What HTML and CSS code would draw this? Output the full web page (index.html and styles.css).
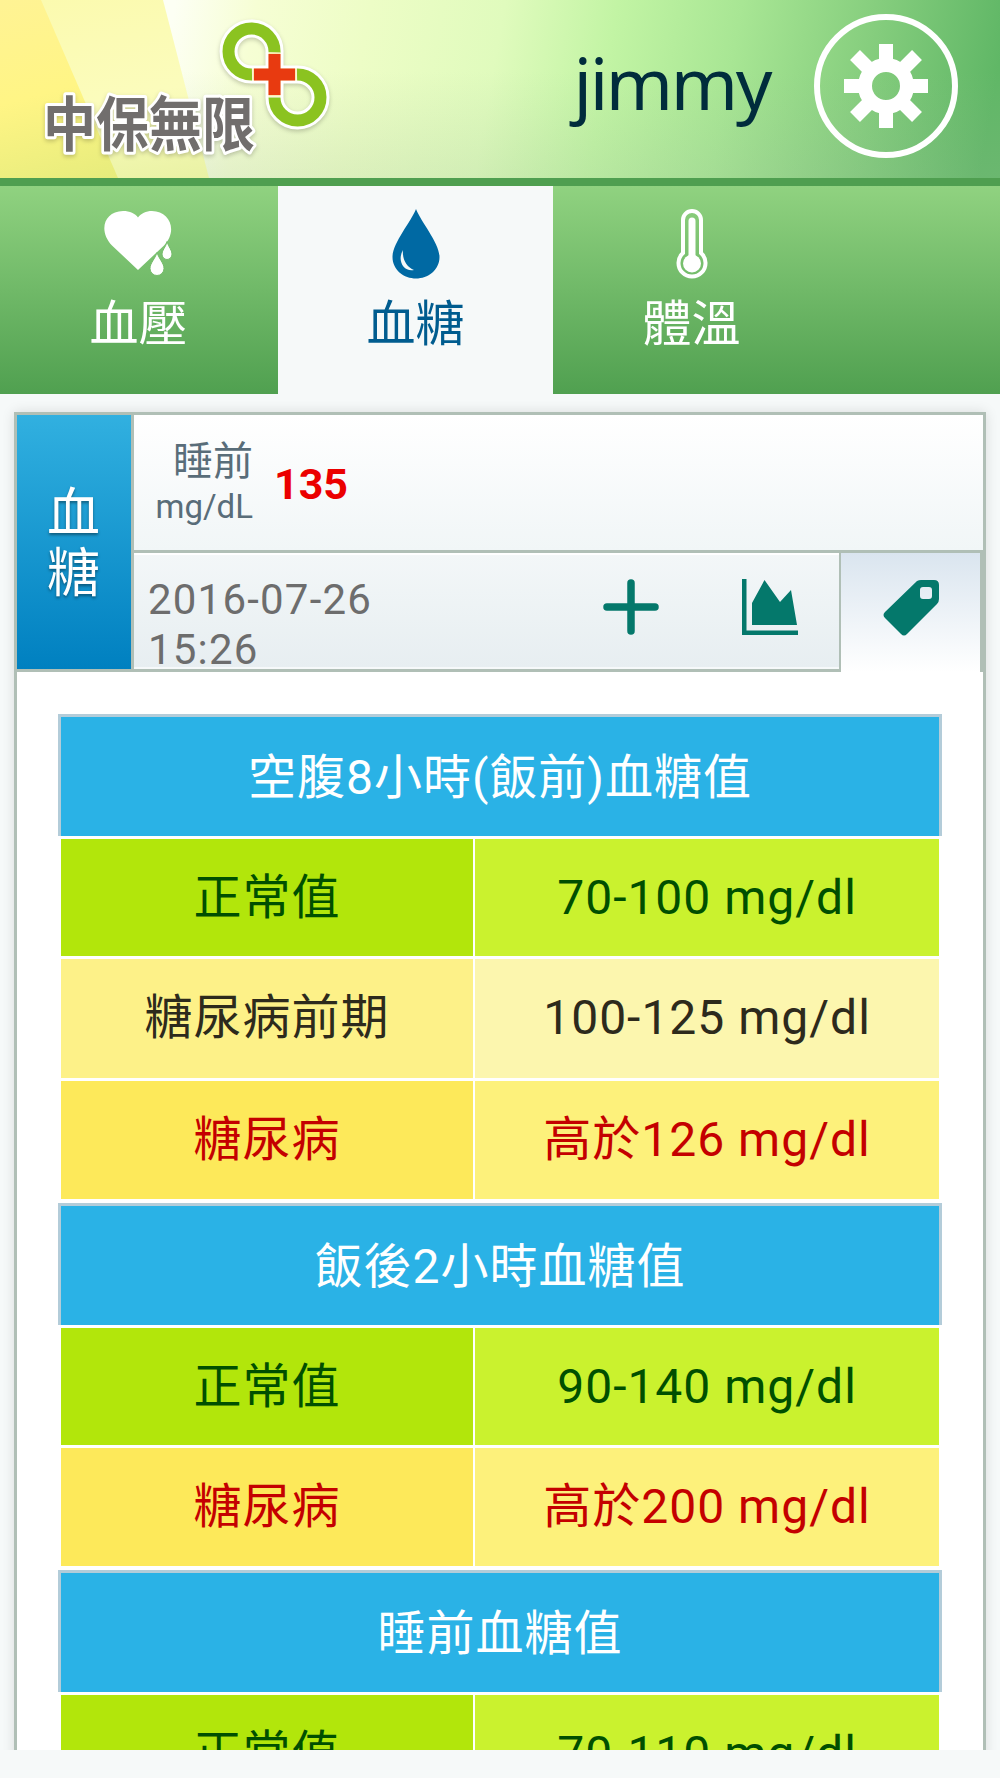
FILE: index.html
```html
<!DOCTYPE html>
<html lang="zh-Hant">
<head>
  <meta charset="UTF-8" />
  <meta name="viewport" content="width=device-width, initial-scale=1.0"/>
  <title>中保無限 - 血糖</title>
  <link rel="stylesheet" href="styles.css">
</head>
<body>
  <header class="header">
    <svg class="logo" width="300" height="150" viewBox="35 10 300 150">
      <g class="logo-outline">
        <path d="M274.5 53 A23 23 0 1 0 252 74.500 H297 A23 23 0 1 1 274.500 97.500 Z" />
      </g>
      <g class="logo-ring">
        <path d="M274.500 52.500 A23 23 0 1 0 252 74.500" />
        <path d="M297 74.500 A23 23 0 1 1 274.500 97.500" />
      </g>
      <path class="logo-gap" d="M252.500 74.500 H296.500 M274.500 52.500 V96.500" />
      <path class="logo-cross" d="M254 74.500 H295 M274.500 54 V95" />
      <text class="logo-text" x="43" y="146" textLength="212" lengthAdjust="spacingAndGlyphs">中保無限</text>
    </svg>
    <div class="user">
      <span class="user-name">jimmy</span>
      <svg class="gear" width="146" height="146" viewBox="-73 -73 146 146">
        <circle class="gear-ring" r="69" />
        <g class="gear-teeth">
          <path d="M0 -42 V-20 M0 42 V20 M-42 0 H-20 M42 0 H20" />
          <path d="M-31 -31 L-15 -15 M31 -31 L15 -15 M-31 31 L-15 15 M31 31 L15 15" />
        </g>
        <circle class="gear-body" r="21" />
      </svg>
    </div>
  </header>

  <nav class="tabs">
    <a class="tab">
      <svg width="72" height="70" viewBox="0 0 72 70" fill="#fff">
        <path d="M35 61 L9 36.500 C-5 21.500 1 2.500 20 2 C27 2 32 4.500 35 8.500 C38 4.500 43 2 49 2 C67 2.500 75 21.500 61 36.500 Z" />
        <g stroke="#74bc6a" stroke-width="1">
          <path d="M54 43.500 C56 50 61 54 61 59.500 A7 7 0 0 1 47 59.500 C47 54 52 50 54 43.500 Z" />
          <path d="M64 32.500 C65.500 38 69 41 69 45 A5 5.500 0 0 1 59 45 C59 41 63 38 64 32.500 Z" />
        </g>
      </svg>
      <span>血壓</span>
    </a>
    <a class="tab active">
      <svg width="48" height="70" viewBox="0 0 48 70">
        <path fill="#0069a3" d="M24 0 C29 13 47.500 34 47.500 48 C47.500 61 36 69.500 24 69.500 C12 69.500 .5 61 .5 48 C.5 34 19 13 24 0 Z" />
        <path fill="#f6f9f9" d="M11 41 C5 51 11 63 22 61 C15 58 10 51 11 41 Z" />
      </svg>
      <span>血糖</span>
    </a>
    <a class="tab">
      <svg width="32" height="72" viewBox="0 0 32 72" fill="none" stroke="#fff">
        <path stroke-width="4" d="M7 12 A9 9 0 0 1 25 12 V45 A13.500 13.500 0 1 1 7 45 Z" />
        <path stroke-width="7" stroke-linecap="round" d="M16 13 V55" />
        <circle cx="16" cy="55.500" r="9" fill="#fff" stroke="none" />
      </svg>
      <span>體溫</span>
    </a>
  </nav>

  <main class="content">
    <section class="card">
      <div class="record">
        <div class="side-label">血<br>糖</div>
        <div class="detail">
          <div class="reading">
            <div class="unit">
              <span class="period">睡前</span>
              <span class="mg">mg/dL</span>
            </div>
            <strong class="value">135</strong>
          </div>
          <div class="toolbar">
            <div class="tools">
              <div class="date">2016-07-26<br>15:26</div>
              <a class="tool">
                <svg width="56" height="56" viewBox="0 0 56 56">
                  <path d="M28 4 V52 M4 28 H52" stroke="#04786b" stroke-width="7.500" stroke-linecap="round" />
                </svg>
              </a>
              <a class="tool">
                <svg width="56" height="56" viewBox="0 0 56 56" fill="#04786b">
                  <path d="M0 0 H4.500 V51.500 H56 V56 H0 Z" />
                  <path d="M10 24 L22.500 1 L38 23 L49 11 L55 46 H10 Z" />
                </svg>
              </a>
            </div>
            <a class="tool current">
              <svg width="58" height="58" viewBox="0 0 58 58" fill="#04786b">
                <path fill-rule="evenodd" d="M35 2 Q37 1 39 1 H52 Q57 1 57 6 V20 Q57 23 55 25 L25 55 Q22 58 19 55 L3 39 Q0 36 3 33 Z M41 8 Q38 8 38 11 V17 Q38 20 41 20 H47 Q50 20 50 17 V11 Q50 8 47 8 Z" />
              </svg>
            </a>
          </div>
        </div>
      </div>

      <div class="ranges">
        <div class="range-group">
          <h2>空腹8小時(飯前)血糖值</h2>
          <div class="range normal"><span>正常值</span><span>70-100 mg/dl</span></div>
          <div class="range warning"><span>糖尿病前期</span><span>100-125 mg/dl</span></div>
          <div class="range danger"><span>糖尿病</span><span>高於126 mg/dl</span></div>
        </div>
        <div class="range-group">
          <h2>飯後2小時血糖值</h2>
          <div class="range normal"><span>正常值</span><span>90-140 mg/dl</span></div>
          <div class="range danger"><span>糖尿病</span><span>高於200 mg/dl</span></div>
        </div>
        <div class="range-group">
          <h2>睡前血糖值</h2>
          <div class="range normal"><span>正常值</span><span>70-110 mg/dl</span></div>
        </div>
      </div>
    </section>
  </main>
</body>
</html>
```
FILE: styles.css
```css
* {
  box-sizing: border-box;
}

body {
  margin: 0;
  height: 1778px;
  overflow: hidden;
  background: #f6f9f9;
  font-family: Roboto, 'Noto Sans CJK TC', sans-serif;
}

/* header */
.header {
  position: relative;
  height: 186px;
  display: flex;
  justify-content: space-between;
  border-bottom: 8px solid #4f9f50;
  background:
    linear-gradient(rgba(255, 255, 255, 0) 40%, rgba(150, 185, 150, 0.2)),
    linear-gradient(100deg, #fdfff4 17%, #f6fed4 25%, #edfdc6 36%, #e0fbbd 49%, #c2f4a4 60%, #a8e694 72%, #86ce7e 85%, #60b766 98%);
}

/* yellow light beams on the left */
.header::before,
.header::after {
  content: '';
  position: absolute;
  left: 0;
  top: 0;
  height: 178px;
}

.header::before {
  width: 210px;
  background: linear-gradient(170deg, #fbfaae, #fbfcbc 55%, #e9f2a4);
  clip-path: polygon(0 0, 163px 0, 209px 100%, 0 100%);
}

.header::after {
  width: 120px;
  background: linear-gradient(165deg, #fff394, #fff585 50%, #e6ec7c);
  clip-path: polygon(0 0, 41px 0, 118px 100%, 0 100%);
}

.logo {
  position: relative;
  z-index: 1;
  margin: 10px 0 0 35px;
  filter: drop-shadow(0 2px 2px rgba(0, 0, 0, 0.2));
}

.logo path {
  fill: none;
  stroke-width: 12;
}

.logo .logo-outline path {
  stroke: #fff;
  stroke-width: 18;
}

.logo .logo-ring {
  stroke: #8bc320;
}

.logo .logo-gap {
  stroke: #fbe9b0;
}

.logo .logo-cross {
  stroke: #e83a10;
}

.logo-text {
  font-family: 'Noto Sans CJK TC', sans-serif;
  font-size: 59px;
  font-weight: bold;
  fill: #716e6d;
  stroke: #fff;
  stroke-width: 6px;
  stroke-linejoin: round;
  paint-order: stroke;
}

.user {
  display: flex;
  align-items: flex-start;
  padding: 13px 41px 0 0;
}

.user-name {
  margin-right: 43px;
  font-family: 'Noto Sans', sans-serif;
  font-size: 72px;
  line-height: 139px;
  letter-spacing: -2.4px;
  color: #002c3c;
}

.gear {
  fill: none;
  stroke: #fff;
}

.gear-ring {
  stroke-width: 6;
}

.gear-teeth {
  stroke-width: 14;
}

.gear-body {
  stroke-width: 14;
}

/* tabs */
.tabs {
  display: flex;
  height: 208px;
  background: linear-gradient(#90d280, #50a050);
}

.tab {
  width: 277px;
  padding-top: 22px;
  display: flex;
  flex-direction: column;
  align-items: center;
  font-size: 49px;
  line-height: 60px;
  color: #fff;
}

.tab svg {
  height: 72px;
  margin-bottom: 15px;
}

.tab.active {
  width: 275px;
  margin-left: 1px;
  background: #f6f9f9;
  color: #005c8f;
}

/* card */
.content {
  height: 1356px;
  padding: 18px 14px 0;
  overflow: hidden;
}

.card {
  height: 1500px;
  border: 3px solid #b0bfb6;
  background: #fff;
  box-shadow: 0 0 12px rgba(0, 0, 0, 0.12);
}

.record {
  display: flex;
  height: 257px;
}

.side-label {
  width: 117px;
  border-right: 3px solid #b0bfb6;
  border-bottom: 3px solid #b0bfb6;
  padding: 69px 1px 0 0;
  background: linear-gradient(#31b0e0, #0080c0);
  background-clip: padding-box;
  font-size: 53px;
  line-height: 60px;
  text-align: center;
  color: #fff;
  text-shadow: 0 2px 3px rgba(0, 0, 0, 0.4);
}

.detail {
  flex: 1;
}

.reading {
  display: flex;
  height: 138px;
  border-bottom: 3px solid #b0bfb6;
  background: linear-gradient(#fff, #f1f6f7);
}

.unit {
  width: 119px;
  padding-top: 24px;
  display: flex;
  flex-direction: column;
  align-items: flex-end;
  color: #596d79;
}

.period {
  font-size: 40px;
  line-height: 46px;
}

.mg {
  font-size: 33px;
  line-height: 43px;
}

.value {
  margin-left: 21px;
  font-size: 43px;
  line-height: 139px;
  color: #eb0000;
}

.toolbar {
  display: flex;
  height: 119px;
}

.tools {
  flex: 1;
  display: flex;
  border-right: 2px solid #b0bfb6;
  border-bottom: 3px solid #b0bfb6;
  background: linear-gradient(#f3f7f8, #e7eef1);
  box-shadow: inset 0 2px #fff, inset 0 -2px #f6f9fa;
}

.date {
  flex: 1;
  padding: 22px 0 0 14px;
  font-size: 42px;
  line-height: 50px;
  letter-spacing: 1.2px;
  color: #6d6d6d;
}

.tool {
  width: 139px;
  padding-top: 26px;
  text-align: center;
}

.tool.current {
  width: 142px;
  border-right: 3px solid #b0bfb6;
  background: linear-gradient(#dae5ef, #fff);
}

/* reference ranges */
.ranges {
  padding: 42px 41px 0;
}

.range-group {
  display: grid;
  row-gap: 3px;
  margin-bottom: 3.3px;
  font-size: 48px;
  letter-spacing: 1px;
}

.range-group h2 {
  height: 122px;
  margin: 0;
  border: 3px solid #b3ccd9;
  border-bottom: 0;
  background: #2ab2e6;
  font-size: 48px;
  font-weight: normal;
  line-height: 121px;
  text-align: center;
  color: #fff;
}

.range {
  display: grid;
  grid-template-columns: 412px 464px;
  column-gap: 2px;
  height: 118.7px;
  padding: 0 3px;
  line-height: 118px;
  text-align: center;
}

.normal {
  height: 117px;
  line-height: 117px;
  color: #004f00;
}

.normal span {
  background: #b2e60b;
}

.normal span + span {
  background: #caf22e;
}

.warning {
  color: #2d2a1c;
}

.warning span {
  background: #fdf188;
}

.warning span + span {
  background: #fcf6ae;
}

.danger {
  color: #c40000;
}

.danger span {
  background: #fde95a;
}

.danger span + span {
  background: #fdf17b;
}
```
